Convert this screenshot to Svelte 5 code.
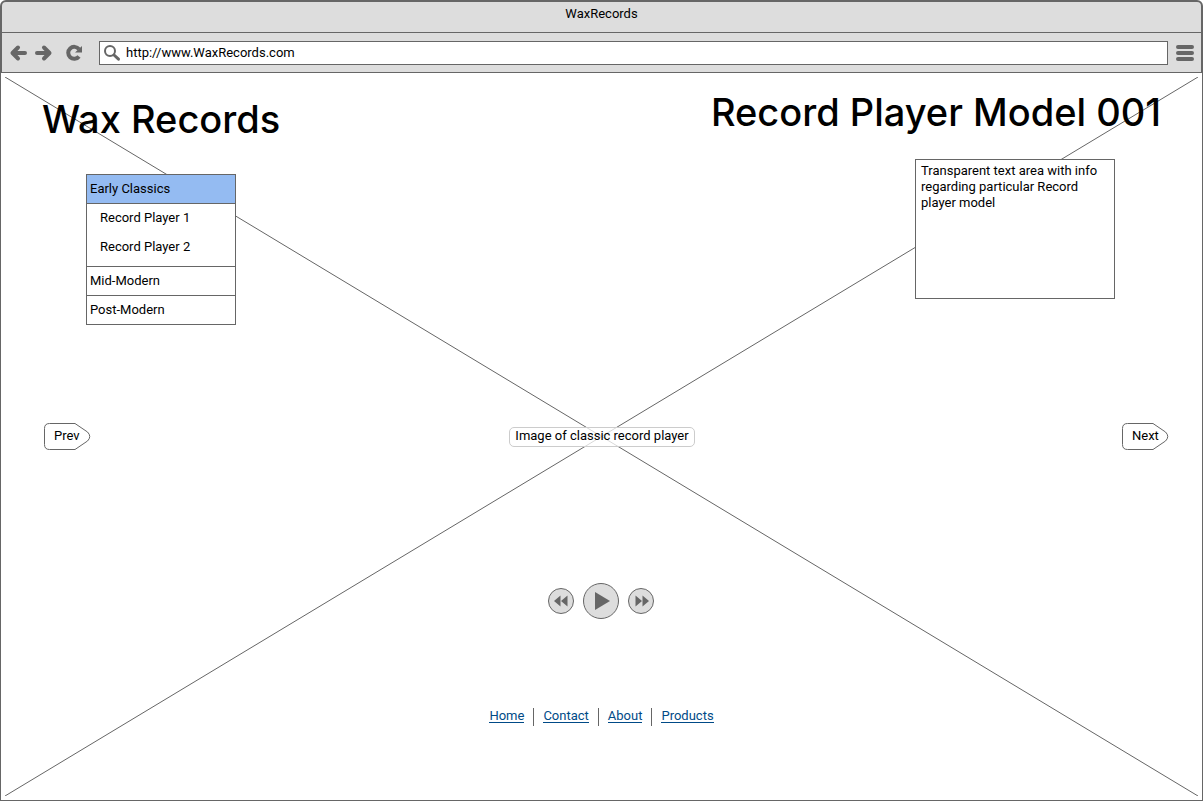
<script>
  let open = $state('Early Classics');
  let url = $state('http://www.WaxRecords.com');
  let info = $state('Transparent text area with info regarding particular Record player model');

  const categories = [
    { name: 'Early Classics', items: ['Record Player 1', 'Record Player 2'] },
    { name: 'Mid-Modern', items: [] },
    { name: 'Post-Modern', items: [] }
  ];
  const links = ['Home', 'Contact', 'About', 'Products'];
</script>

<div class="window">
  <header class="chrome">
    <div class="titlebar">WaxRecords</div>
    <div class="toolbar">
      <div class="history">
        <button class="tool" aria-label="Back">
          <svg width="18" height="18" viewBox="0 0 18 18"><path d="M9 3.500 3.500 9 9 14.500M4 9H16" /></svg>
        </button>
        <button class="tool" aria-label="Forward">
          <svg width="18" height="18" viewBox="0 0 18 18"><path d="M9 3.500 14.500 9 9 14.500M14 9H2" /></svg>
        </button>
      </div>
      <button class="tool reload" aria-label="Reload">
        <svg width="18" height="18" viewBox="0 0 18 18">
          <path class="arc" d="M14 5.200A6 6 0 1 0 14 12.500" />
          <path class="solid" d="M17 2V8.500H10Z" />
        </svg>
      </button>
      <div class="address">
        <svg width="18" height="18" viewBox="0 0 18 18" aria-hidden="true">
          <circle cx="7" cy="7" r="5" />
          <path d="M11 11 15.500 15.200" />
        </svg>
        <input type="text" aria-label="Address" spellcheck="false" bind:value={url} />
      </div>
      <button class="tool" aria-label="Menu">
        <svg width="18" height="18" viewBox="0 0 18 18"><path d="M2 3H16M2 9H16M2 15H16" /></svg>
      </button>
    </div>
  </header>

  <main>
    <svg class="cross" aria-hidden="true">
      <line x1="0" y1="0" x2="100%" y2="100%" />
      <line x1="100%" y1="0" x2="0" y2="100%" />
    </svg>

    <div class="top">
      <section class="brand">
        <h1>Wax Records</h1>
        <nav class="accordion" aria-label="Categories">
          {#each categories as category}
            <div class="group">
              <button
                class="category"
                class:active={open === category.name}
                aria-expanded={open === category.name}
                onclick={() => (open = category.name)}>{category.name}</button>
              {#if open === category.name && category.items.length}
                <ul>
                  {#each category.items as item}
                    <li>{item}</li>
                  {/each}
                </ul>
              {/if}
            </div>
          {/each}
        </nav>
      </section>
      <section class="model">
        <h2>Record Player Model 001</h2>
        <textarea aria-label="Model information" spellcheck="false" bind:value={info}></textarea>
      </section>
    </div>

    <div class="stage">
      <button class="tag">
        <svg width="47" height="28" viewBox="0 0 47 28" aria-hidden="true">
          <path d="M5.500 .500H31L43.500 9Q48 13.500 43.500 18L31 26.500H5.500Q.500 26.500 .500 21.500V5.500Q.500 .500 5.500 .500Z" />
        </svg>
        <span>Prev</span>
      </button>
      <p class="caption">Image of classic record player</p>
      <button class="tag">
        <svg width="47" height="28" viewBox="0 0 47 28" aria-hidden="true">
          <path d="M5.500 .500H31L43.500 9Q48 13.500 43.500 18L31 26.500H5.500Q.500 26.500 .500 21.500V5.500Q.500 .500 5.500 .500Z" />
        </svg>
        <span>Next</span>
      </button>
    </div>

    <div class="player">
      <button class="round" aria-label="Rewind">
        <svg width="16" height="12" viewBox="0 0 16 12"><path d="M7.500 .500V11.500L1 6ZM14.500 .500V11.500L8 6Z" /></svg>
      </button>
      <button class="round play" aria-label="Play">
        <svg width="18" height="20" viewBox="0 0 18 20"><path d="M3 1V19L18 10Z" /></svg>
      </button>
      <button class="round" aria-label="Fast forward">
        <svg width="16" height="12" viewBox="0 0 16 12"><path d="M2.500 .500V11.500L9 6ZM9.500 .500V11.500L16 6Z" /></svg>
      </button>
    </div>

    <nav class="links" aria-label="Site">
      {#each links as link}
        <span><a href="#{link.toLowerCase()}">{link}</a></span>
      {/each}
    </nav>
  </main>
</div>

<style>
  :global(body) {
    background: #fff;
  }

  .window,
  .window * {
    box-sizing: border-box;
  }

  .window {
    display: flex;
    flex-direction: column;
    min-height: 100vh;
    color: #000;
    font: 400 13px/16px Roboto, 'Liberation Sans', sans-serif;
  }

  button,
  input,
  textarea {
    margin: 0;
    padding: 0;
    border: 0;
    background: none;
    color: inherit;
    font: inherit;
  }

  button {
    cursor: pointer;
  }

  svg {
    display: block;
  }

  .chrome {
    border: 2px solid #666;
    border-bottom-width: 1px;
    border-radius: 6px 6px 0 0;
    background: #ddd;
  }

  .titlebar {
    height: 31px;
    padding-top: 4px;
    border-bottom: 1px solid #666;
    text-align: center;
  }

  .toolbar {
    display: flex;
    align-items: center;
    height: 39px;
    padding: 0 7px;
  }

  .history {
    display: flex;
    gap: 8px;
  }

  .tool path {
    fill: none;
    stroke: #666;
    stroke-width: 4;
    stroke-linecap: round;
    stroke-linejoin: round;
  }

  .tool .arc {
    stroke-width: 4;
    stroke-linecap: butt;
  }

  .tool .solid {
    fill: #666;
    stroke: none;
  }

  .reload {
    margin: 0 16px 0 12px;
  }

  .address {
    display: flex;
    flex: 1;
    align-items: center;
    gap: 5px;
    height: 24px;
    margin-right: 8px;
    padding: 0 3px;
    border: 1px solid #666;
    background: #fff;
  }

  .address circle,
  .address path {
    fill: none;
    stroke: #666;
    stroke-width: 2;
  }

  .address path {
    stroke-width: 3;
    stroke-linecap: round;
  }

  .address input {
    flex: 1;
    min-width: 0;
    padding-top: 1px;
    outline: 0;
  }

  main {
    position: relative;
    display: flex;
    flex: 1;
    flex-direction: column;
    border: 1px solid #666;
    border-top: 0;
  }

  main > * {
    position: relative;
  }

  .cross {
    position: absolute;
    top: 4px;
    left: 4px;
    width: calc(100% - 8px);
    height: calc(100% - 8px);
    stroke: #666;
  }

  .top {
    display: flex;
    justify-content: space-between;
    padding: 15px 41px 0 41px;
  }

  h1,
  h2 {
    margin: 0;
    font-family: Inter, 'Liberation Sans', sans-serif;
    font-size: 38px;
    font-weight: 500;
    line-height: 48px;
    white-space: nowrap;
  }

  .brand {
    padding-top: 7px;
  }

  .accordion {
    width: 150px;
    margin: 31px 0 0 44px;
    border: 1px solid #666;
    background: #fff;
  }

  .group + .group {
    border-top: 1px solid #666;
  }

  .category {
    display: block;
    width: 100%;
    height: 28px;
    padding: 0 3px;
    text-align: left;
  }

  .category.active {
    background: #94bbf2;
  }

  ul {
    margin: 0;
    padding: 0 0 4px;
    border-top: 1px solid #666;
    list-style: none;
  }

  li {
    padding: 6px 13px 7px;
  }

  .model {
    display: flex;
    flex-direction: column;
    align-items: flex-end;
  }

  textarea {
    width: 200px;
    height: 140px;
    margin: 23px 46px 0 0;
    padding: 3px 5px;
    border: 1px solid #666;
    background: #fff;
    resize: none;
  }

  .stage {
    display: flex;
    align-items: center;
    justify-content: space-between;
    margin-top: 98px;
    padding: 0 33px 0 43px;
  }

  .tag {
    display: grid;
    width: 47px;
    height: 28px;
  }

  .tag > * {
    grid-area: 1 / 1;
  }

  .tag path {
    fill: #fff;
    stroke: #666;
  }

  .tag span {
    padding: 5px 0 0 10px;
    text-align: left;
  }

  .caption {
    margin: 0 9px 0 0;
    padding: 0 5px 2px;
    border: 1px solid #ccc;
    border-radius: 5px;
    background: rgb(255 255 255 / 75%);
  }

  .player {
    display: flex;
    align-items: center;
    justify-content: center;
    gap: 9px;
    margin-top: 132px;
    padding-right: 2px;
  }

  .round {
    display: grid;
    place-items: center;
    width: 26px;
    height: 26px;
    border: 1px solid #666;
    border-radius: 50%;
    background: #ddd;
  }

  .round path {
    fill: #666;
  }

  .play {
    width: 36px;
    height: 36px;
  }

  .links {
    display: flex;
    justify-content: center;
    margin: 89px 0 40px;
  }

  .links span {
    height: 18px;
    padding: 0 9px;
  }

  .links span + span {
    border-left: 1px solid #666;
  }

  .links a {
    display: block;
    height: 15px;
    border-bottom: 1px solid #004a87;
    color: #004a87;
    line-height: 16px;
    text-decoration: none;
  }
</style>
